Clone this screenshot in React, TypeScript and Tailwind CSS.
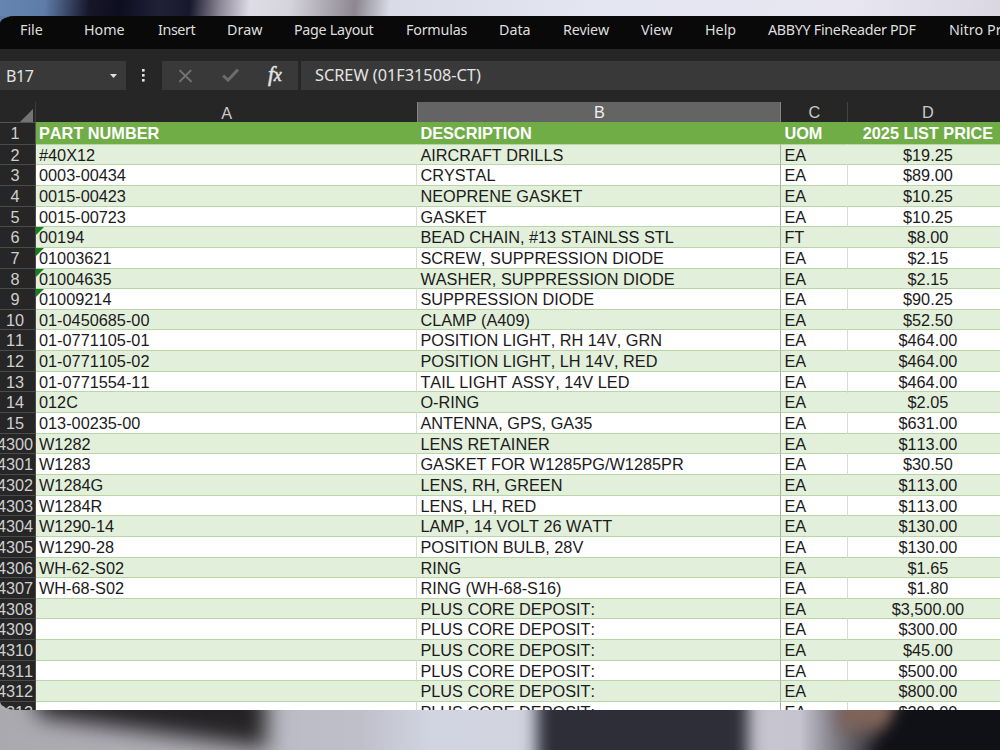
import { clsx } from "clsx";

type Row = {
  id: number;
  part: string;
  description: string;
  uom: string;
  price: string;
  flagged?: boolean;
};

const tabs = [
  { label: "File", width: "w-[64px]" },
  { label: "Home", width: "w-[74px]" },
  { label: "Insert", width: "w-[69px] tracking-[-0.4px]" },
  { label: "Draw", width: "w-[67px]" },
  { label: "Page Layout", width: "w-[112px] tracking-[-0.3px]" },
  { label: "Formulas", width: "w-[93px] tracking-[-0.2px]" },
  { label: "Data", width: "w-[64px]" },
  { label: "Review", width: "w-[78px] tracking-[-0.2px]" },
  { label: "View", width: "w-[64px]" },
  { label: "Help", width: "w-[63px]" },
  { label: "ABBYY FineReader PDF", width: "w-[181px] tracking-[-0.3px]" },
  { label: "Nitro Pro", width: "w-[80px]" },
];

const rows: Row[] = [
  { id: 2, part: "#40X12", description: "AIRCRAFT DRILLS", uom: "EA", price: "$19.25" },
  { id: 3, part: "0003-00434", description: "CRYSTAL", uom: "EA", price: "$89.00" },
  { id: 4, part: "0015-00423", description: "NEOPRENE GASKET", uom: "EA", price: "$10.25" },
  { id: 5, part: "0015-00723", description: "GASKET", uom: "EA", price: "$10.25" },
  { id: 6, part: "00194", description: "BEAD CHAIN, #13 STAINLSS STL", uom: "FT", price: "$8.00", flagged: true },
  { id: 7, part: "01003621", description: "SCREW, SUPPRESSION DIODE", uom: "EA", price: "$2.15", flagged: true },
  { id: 8, part: "01004635", description: "WASHER, SUPPRESSION DIODE", uom: "EA", price: "$2.15", flagged: true },
  { id: 9, part: "01009214", description: "SUPPRESSION DIODE", uom: "EA", price: "$90.25", flagged: true },
  { id: 10, part: "01-0450685-00", description: "CLAMP (A409)", uom: "EA", price: "$52.50" },
  { id: 11, part: "01-0771105-01", description: "POSITION LIGHT, RH 14V, GRN", uom: "EA", price: "$464.00" },
  { id: 12, part: "01-0771105-02", description: "POSITION LIGHT, LH 14V, RED", uom: "EA", price: "$464.00" },
  { id: 13, part: "01-0771554-11", description: "TAIL LIGHT ASSY, 14V LED", uom: "EA", price: "$464.00" },
  { id: 14, part: "012C", description: "O-RING", uom: "EA", price: "$2.05" },
  { id: 15, part: "013-00235-00", description: "ANTENNA, GPS, GA35", uom: "EA", price: "$631.00" },
  { id: 4300, part: "W1282", description: "LENS RETAINER", uom: "EA", price: "$113.00" },
  { id: 4301, part: "W1283", description: "GASKET FOR W1285PG/W1285PR", uom: "EA", price: "$30.50" },
  { id: 4302, part: "W1284G", description: "LENS, RH, GREEN", uom: "EA", price: "$113.00" },
  { id: 4303, part: "W1284R", description: "LENS, LH, RED", uom: "EA", price: "$113.00" },
  { id: 4304, part: "W1290-14", description: "LAMP, 14 VOLT 26 WATT", uom: "EA", price: "$130.00" },
  { id: 4305, part: "W1290-28", description: "POSITION BULB, 28V", uom: "EA", price: "$130.00" },
  { id: 4306, part: "WH-62-S02", description: "RING", uom: "EA", price: "$1.65" },
  { id: 4307, part: "WH-68-S02", description: "RING (WH-68-S16)", uom: "EA", price: "$1.80" },
  { id: 4308, part: "", description: "PLUS CORE DEPOSIT:", uom: "EA", price: "$3,500.00" },
  { id: 4309, part: "", description: "PLUS CORE DEPOSIT:", uom: "EA", price: "$300.00" },
  { id: 4310, part: "", description: "PLUS CORE DEPOSIT:", uom: "EA", price: "$45.00" },
  { id: 4311, part: "", description: "PLUS CORE DEPOSIT:", uom: "EA", price: "$500.00" },
  { id: 4312, part: "", description: "PLUS CORE DEPOSIT:", uom: "EA", price: "$800.00" },
  { id: 4313, part: "", description: "PLUS CORE DEPOSIT:", uom: "EA", price: "$200.00" },
];

const grid = "grid grid-cols-[36px_381.4px_364px_67px_159px]";

function MenuBar() {
  return (
    <nav className="flex h-[33px] shrink-0 bg-[#090909] pl-5 font-['Noto_Sans',sans-serif] text-[14.3px] leading-[27px] text-[#dedede]">
      {tabs.map((tab) => (
        <span key={tab.label} className={clsx("shrink-0 whitespace-nowrap", tab.width)}>
          {tab.label}
        </span>
      ))}
    </nav>
  );
}

function FormulaBar() {
  return (
    <div className="flex h-[53px] shrink-0 items-start pt-3 font-['Noto_Sans',sans-serif] text-[16px] text-[#e4e4e4]">
      <div className="flex h-[29px] w-[126px] items-center justify-between bg-[#393939] pr-[9px] pl-[6px]">
        <span className="tracking-[-0.4px]">B17</span>
        <svg width="7" height="4" viewBox="0 0 7 4">
          <path d="M0 0h7L3.5 4z" fill="#e0e0e0" />
        </svg>
      </div>
      <div className="flex h-[29px] w-[36px] items-center justify-center pr-px">
        <svg width="3" height="13" viewBox="0 0 3 13" fill="#e4e4e4">
          <rect width="2.6" height="2.6" />
          <rect y="5" width="2.6" height="2.6" />
          <rect y="10" width="2.6" height="2.6" />
        </svg>
      </div>
      <div className="flex h-[29px] w-[136px] items-center bg-[#393939] pl-[16px]">
        <svg width="15" height="14" viewBox="0 0 16 15" fill="none" stroke="#737373" strokeWidth="2.2">
          <path d="M1.5 1.2 14.5 13.8M14 1.2 1.5 13.8" />
        </svg>
        <svg className="ml-[29px]" width="17" height="15" viewBox="0 0 17 15" fill="none" stroke="#6c6c6c" strokeWidth="3">
          <path d="M1.2 7.5 6 12.2 16 1.5" />
        </svg>
        <span className="-mt-[4px] ml-[29px] font-['Liberation_Serif',serif] text-[22px] leading-none tracking-[-0.5px] text-[#e4e4e4] italic [-webkit-text-stroke:0.5px_#e4e4e4]">
          f<span className="text-[18px]">x</span>
        </span>
      </div>
      <div className="ml-[3px] flex h-[29px] flex-1 items-center bg-[#393939] pl-[14px]">
        <span className="text-[16.3px] whitespace-nowrap">SCREW (01F31508-CT)</span>
      </div>
    </div>
  );
}

function ColumnHeaders() {
  return (
    <div className={clsx(grid, "h-[20px] shrink-0 text-center text-[16.3px] leading-[22px] text-[#c9c9c9]")}>
      <div className="flex items-end justify-end border-r border-[#3c3c3c] pr-[2px] pb-[2px]">
        <svg width="14" height="14" viewBox="0 0 14 14">
          <path d="M14 0v14H0z" fill="#747474" />
        </svg>
      </div>
      <div>A</div>
      <div className="border-x border-b-2 border-x-[#858585] border-b-[#377a45] bg-[#646464] leading-[21px] text-[#eee]">B</div>
      <div className="border-r border-[#444] leading-[21px]">C</div>
      <div className="leading-[21px]">D</div>
    </div>
  );
}

function Sheet() {
  return (
    <div className="flex-1 overflow-hidden">
      <div className={clsx(grid, "h-[21.7px] text-[16.3px] leading-[22px] font-bold text-white")}>
        <div className="border-t border-r border-[#555] pr-[5px] text-center leading-[21px] font-normal text-[#cfcfcf]">1</div>
        <div className="bg-[#70ad47] pl-[3px]">PART NUMBER</div>
        <div className="bg-[#70ad47] pl-[3px]">DESCRIPTION</div>
        <div className="bg-[#70ad47] pl-[3px]">UOM</div>
        <div className="bg-[#70ad47] text-center">2025 LIST PRICE</div>
      </div>
      {rows.map((row, i) => {
        const banded = i % 2 === 0;
        const line = banded ? "border-r-transparent" : "border-r-[#d8dcd5]";
        return (
          <div
            key={row.id}
            className={clsx(grid, "h-[20.65px] text-[16.3px] leading-[20.8px] text-[#1b1b1b]", banded ? "bg-[#e2efda]" : "bg-white")}
          >
            <div className="flex justify-center border-t border-r border-[#4b4b4b] bg-[#262626] pr-[5px] whitespace-nowrap text-[#cfcfcf]">
              {row.id}
            </div>
            <div className={clsx("relative border-t border-r border-t-[#b9d6a6] pl-[3px]", line)}>
              {row.flagged && (
                <svg className="absolute top-0 left-0" width="8" height="8" viewBox="0 0 8 8">
                  <path d="M0 0h8L0 8z" fill="#168021" />
                </svg>
              )}
              <span className="relative">{row.part}</span>
            </div>
            <div className="border-t border-r border-t-[#b9d6a6] border-r-[#a9b0a5] pl-[3px]">{row.description}</div>
            <div className={clsx("border-t border-r border-t-[#b9d6a6] pl-[3px]", line)}>{row.uom}</div>
            <div className="border-t border-[#b9d6a6] text-center">{row.price}</div>
          </div>
        );
      })}
    </div>
  );
}

export default function App() {
  return (
    <div className="flex h-[750px] w-[1000px] flex-col overflow-hidden bg-[linear-gradient(180deg,#5f7ca9_50%,#b0afb6_50%)] font-['Liberation_Sans',Arial,sans-serif] [font-kerning:none]">
      <div className="h-4 shrink-0 bg-[linear-gradient(95deg,#6685b1_0%,#5f7ca9_4.5%,#171629_9%,#0e0e20_12%,#202139_16%,#18182c_19%,#8b8796_22%,#dedce6_25%,#d5d3dc_29%,#a9a5ad_33%,#8c8790_35.5%,#d9dbe6_39%,#e4e6f2_60%,#e7e6f1_85%,#dad7e2_100%)]" />
      <main className="flex h-[694px] shrink-0 flex-col overflow-hidden rounded-tl-[16px_8px] rounded-bl-[16px_9px] bg-[#262626]">
        <MenuBar />
        <FormulaBar />
        <ColumnHeaders />
        <Sheet />
      </main>
      <div className="relative h-10 shrink-0 overflow-hidden bg-[linear-gradient(90deg,#aaa9b0_0%,#b3b2b9_25%,#bdbdc8_30%,#bfbfca_36%,#d1d4e1_43%,#d2d4e0_51%,#c6c6d1_66%,#c5c4cf_80%,#111117_89%,#16171f_100%)]">
        <div className="absolute -top-[44px] left-[36px] h-[66px] w-[230px] bg-[#242224] blur-[11px] [transform:skewY(8deg)]" />
        <div className="absolute -top-5 left-[537px] h-[90px] w-[211px] bg-[#2d2e38] blur-[8px]" />
        <div className="absolute -top-5 left-[838px] h-[42px] w-[60px] bg-[#806459] blur-[9px]" />
        <div className="absolute -top-5 left-[884px] h-[90px] w-[150px] bg-[#101117] blur-[9px] [transform:skewX(-32deg)]" />
      </div>
    </div>
  );
}
